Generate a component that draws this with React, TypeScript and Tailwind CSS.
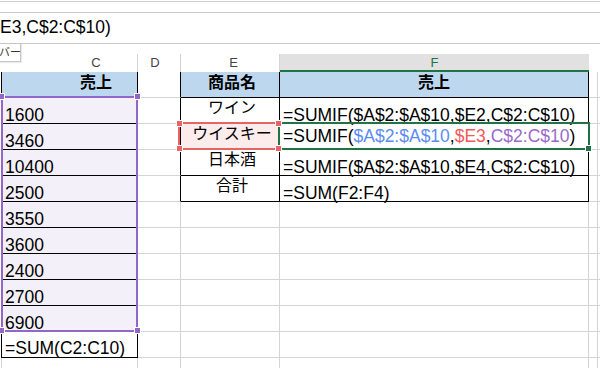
import React from "react";

const stubB = "w-[2px] shrink-0 border-r border-r-black";
const stubG = "w-[2px] shrink-0 border-r border-r-[#d4d4d4]";
const cT = "w-[136px] shrink-0 border-r border-b border-black";
const cG = "w-[136px] shrink-0 border-r border-b border-[#d4d4d4]";
const dB = "w-[43px] shrink-0 border-r border-b border-r-black border-b-[#d4d4d4]";
const dG = "w-[43px] shrink-0 border-r border-b border-[#d4d4d4]";
const eT = "w-[99px] shrink-0 border-r border-b border-black";
const eG = "w-[99px] shrink-0 border-r border-b border-[#d4d4d4]";
const fT = "w-[309px] shrink-0 border-r border-b border-black";
const fG = "w-[309px] shrink-0 border-r border-b border-[#d4d4d4]";
const gC = "w-[9px] shrink-0 border-r border-b border-[#d4d4d4]";
const hC = "flex-1 border-b border-[#d4d4d4]";

const num = "flex items-end pl-[3px] text-[17.5px] leading-[16px] whitespace-nowrap";
const jp = "flex items-center justify-center pl-[4px] pb-[5px] text-[16px] leading-[20px] whitespace-nowrap";
const jpB = "flex items-center justify-center pb-[4px] text-[16px] leading-[20px] font-bold whitespace-nowrap";

function Row({ children }: { children: React.ReactNode }) {
  return <div className="flex h-[26px]">{children}</div>;
}

function Tail() {
  return (
    <>
      <div className={gC} />
      <div className={hC} />
    </>
  );
}

const nums = ["1600", "3460", "10400", "2500", "3550", "3600", "2400", "2700", "6900"];

export default function App() {
  return (
    <div className="relative w-[600px] h-[368px] overflow-hidden bg-white text-black font-['Liberation_Sans','Noto_Sans_CJK_JP',sans-serif]">
      {/* top area / formula bar */}
      <div className="h-[1px]" />
      <div className="h-[1px] bg-[#d0d0d0]" />
      <div className="h-[10px]" />
      <div className="h-[1px] bg-[#c8c8c8]" />
      <div className="h-[30px] pt-[6px] text-[17.5px] leading-[16px] whitespace-nowrap">E3,C$2:C$10)</div>
      <div className="h-[1px] bg-[#c8c8c8]" />
      <div className="h-[10px]" />

      {/* column headers */}
      <div className="flex h-[18px] text-[13px] leading-[13px] text-[#444]">
        <div className="w-[2px] shrink-0" />
        <div className="w-[136px] shrink-0 border-r border-[#d4d4d4] pl-[53px] pt-[2px] text-center">C</div>
        <div className="w-[43px] shrink-0 border-r border-[#d4d4d4] pr-[8px] pt-[2px] text-center">D</div>
        <div className="w-[99px] shrink-0 border-r border-[#d4d4d4] pl-[7px] pt-[2px] text-center">E</div>
        <div className="w-[309px] shrink-0 bg-[#e1e1e1] border-b-2 border-[#217346] pt-[2px] text-center text-[#217346]">F</div>
        <div className="flex-1" />
      </div>

      {/* row 1: headers */}
      <Row>
        <div className={stubB} />
        <div className={`${cT} ${jpB} bg-[#bdd7ee] pl-[53px]`}>売上</div>
        <div className={dB} />
        <div className={`${eT} ${jpB} bg-[#bdd7ee] pl-[4px]`}>商品名</div>
        <div className={`${fT} ${jpB} bg-[#bdd7ee]`}>売上</div>
        <Tail />
      </Row>

      {/* row 2 */}
      <Row>
        <div className={stubB} />
        <div className={`${cT} ${num} bg-[#f3f0f9]`}>{nums[0]}</div>
        <div className={dB} />
        <div className={`${eT} ${jp}`}>ワイン</div>
        <div className={`${fT} ${num}`}>=SUMIF($A$2:$A$10,$E2,C$2:C$10)</div>
        <Tail />
      </Row>

      {/* row 3 */}
      <Row>
        <div className={stubB} />
        <div className={`${cT} ${num} bg-[#f3f0f9]`}>{nums[1]}</div>
        <div className={dB} />
        <div className={`${eT} ${jp} bg-[#fcecec]`}>ウイスキー</div>
        <div className={`${fT} ${num} pb-[5px]`}>
          <span>=SUMIF(</span>
          <span className="text-[#5b8def]">$A$2:$A$10</span>
          <span>,</span>
          <span className="text-[#f05a5a]">$E3</span>
          <span>,</span>
          <span className="text-[#9a6acb]">C$2:C$10</span>
          <span>)</span>
        </div>
        <Tail />
      </Row>

      {/* row 4 */}
      <Row>
        <div className={stubB} />
        <div className={`${cT} ${num} bg-[#f3f0f9]`}>{nums[2]}</div>
        <div className={dB} />
        <div className={`${eT} ${jp}`}>日本酒</div>
        <div className={`${fT} ${num}`}>=SUMIF($A$2:$A$10,$E4,C$2:C$10)</div>
        <Tail />
      </Row>

      {/* row 5 */}
      <Row>
        <div className={stubB} />
        <div className={`${cT} ${num} bg-[#f3f0f9]`}>{nums[3]}</div>
        <div className={dB} />
        <div className={`${eT} ${jp}`}>合計</div>
        <div className={`${fT} ${num}`}>=SUM(F2:F4)</div>
        <Tail />
      </Row>

      {/* rows 6-10 */}
      {nums.slice(4).map((n) => (
        <Row key={n}>
          <div className={stubB} />
          <div className={`${cT} ${num} bg-[#f3f0f9]`}>{n}</div>
          <div className={dG} />
          <div className={eG} />
          <div className={fG} />
          <Tail />
        </Row>
      ))}

      {/* row 11 */}
      <Row>
        <div className={stubB} />
        <div className={`${cT} ${num} pb-[1px]`}>=SUM(C2:C10)</div>
        <div className={dG} />
        <div className={eG} />
        <div className={fG} />
        <Tail />
      </Row>

      {/* row 12 */}
      <Row>
        <div className={stubG} />
        <div className={cG} />
        <div className={dG} />
        <div className={eG} />
        <div className={fG} />
        <Tail />
      </Row>

      {/* purple range C2:C10 */}
      <div className="absolute left-[1px] top-[96px] w-[137px] h-[236px] border-2 border-[#9168c8]" />
      <div className="absolute left-[-2px] top-[93px] w-[7px] h-[7px] bg-[#9168c8] border border-white" />
      <div className="absolute left-[134px] top-[93px] w-[7px] h-[7px] bg-[#9168c8] border border-white" />
      <div className="absolute left-[-2px] top-[327px] w-[7px] h-[7px] bg-[#9168c8] border border-white" />
      <div className="absolute left-[134px] top-[327px] w-[7px] h-[7px] bg-[#9168c8] border border-white" />

      {/* red range E3 */}
      <div className="absolute left-[178px] top-[122px] w-[102px] h-[28px] border-2 border-[#e86464]" />
      {/* green active cell F3 */}
      <div className="absolute left-[278px] top-[122px] w-[312px] h-[28px] border-2 border-[#217346]" />
      <div className="absolute left-[176px] top-[120px] w-[7px] h-[7px] bg-[#e86464] border border-white" />
      <div className="absolute left-[275px] top-[120px] w-[7px] h-[7px] bg-[#e86464] border border-white" />
      <div className="absolute left-[176px] top-[145px] w-[7px] h-[7px] bg-[#e86464] border border-white" />
      <div className="absolute left-[275px] top-[145px] w-[7px] h-[7px] bg-[#e86464] border border-white" />
      <div className="absolute left-[585px] top-[145px] w-[7px] h-[7px] bg-[#217346] border border-white" />

      {/* tooltip */}
      <div className="absolute left-[-4px] top-[43px] w-[25px] h-[19px] border border-[#c6c6c6] bg-white pl-[2px] text-[11px] leading-[17px] text-[#333] whitespace-nowrap shadow-[1px_1px_1px_rgba(0,0,0,0.08)]">
        バー
      </div>
    </div>
  );
}
